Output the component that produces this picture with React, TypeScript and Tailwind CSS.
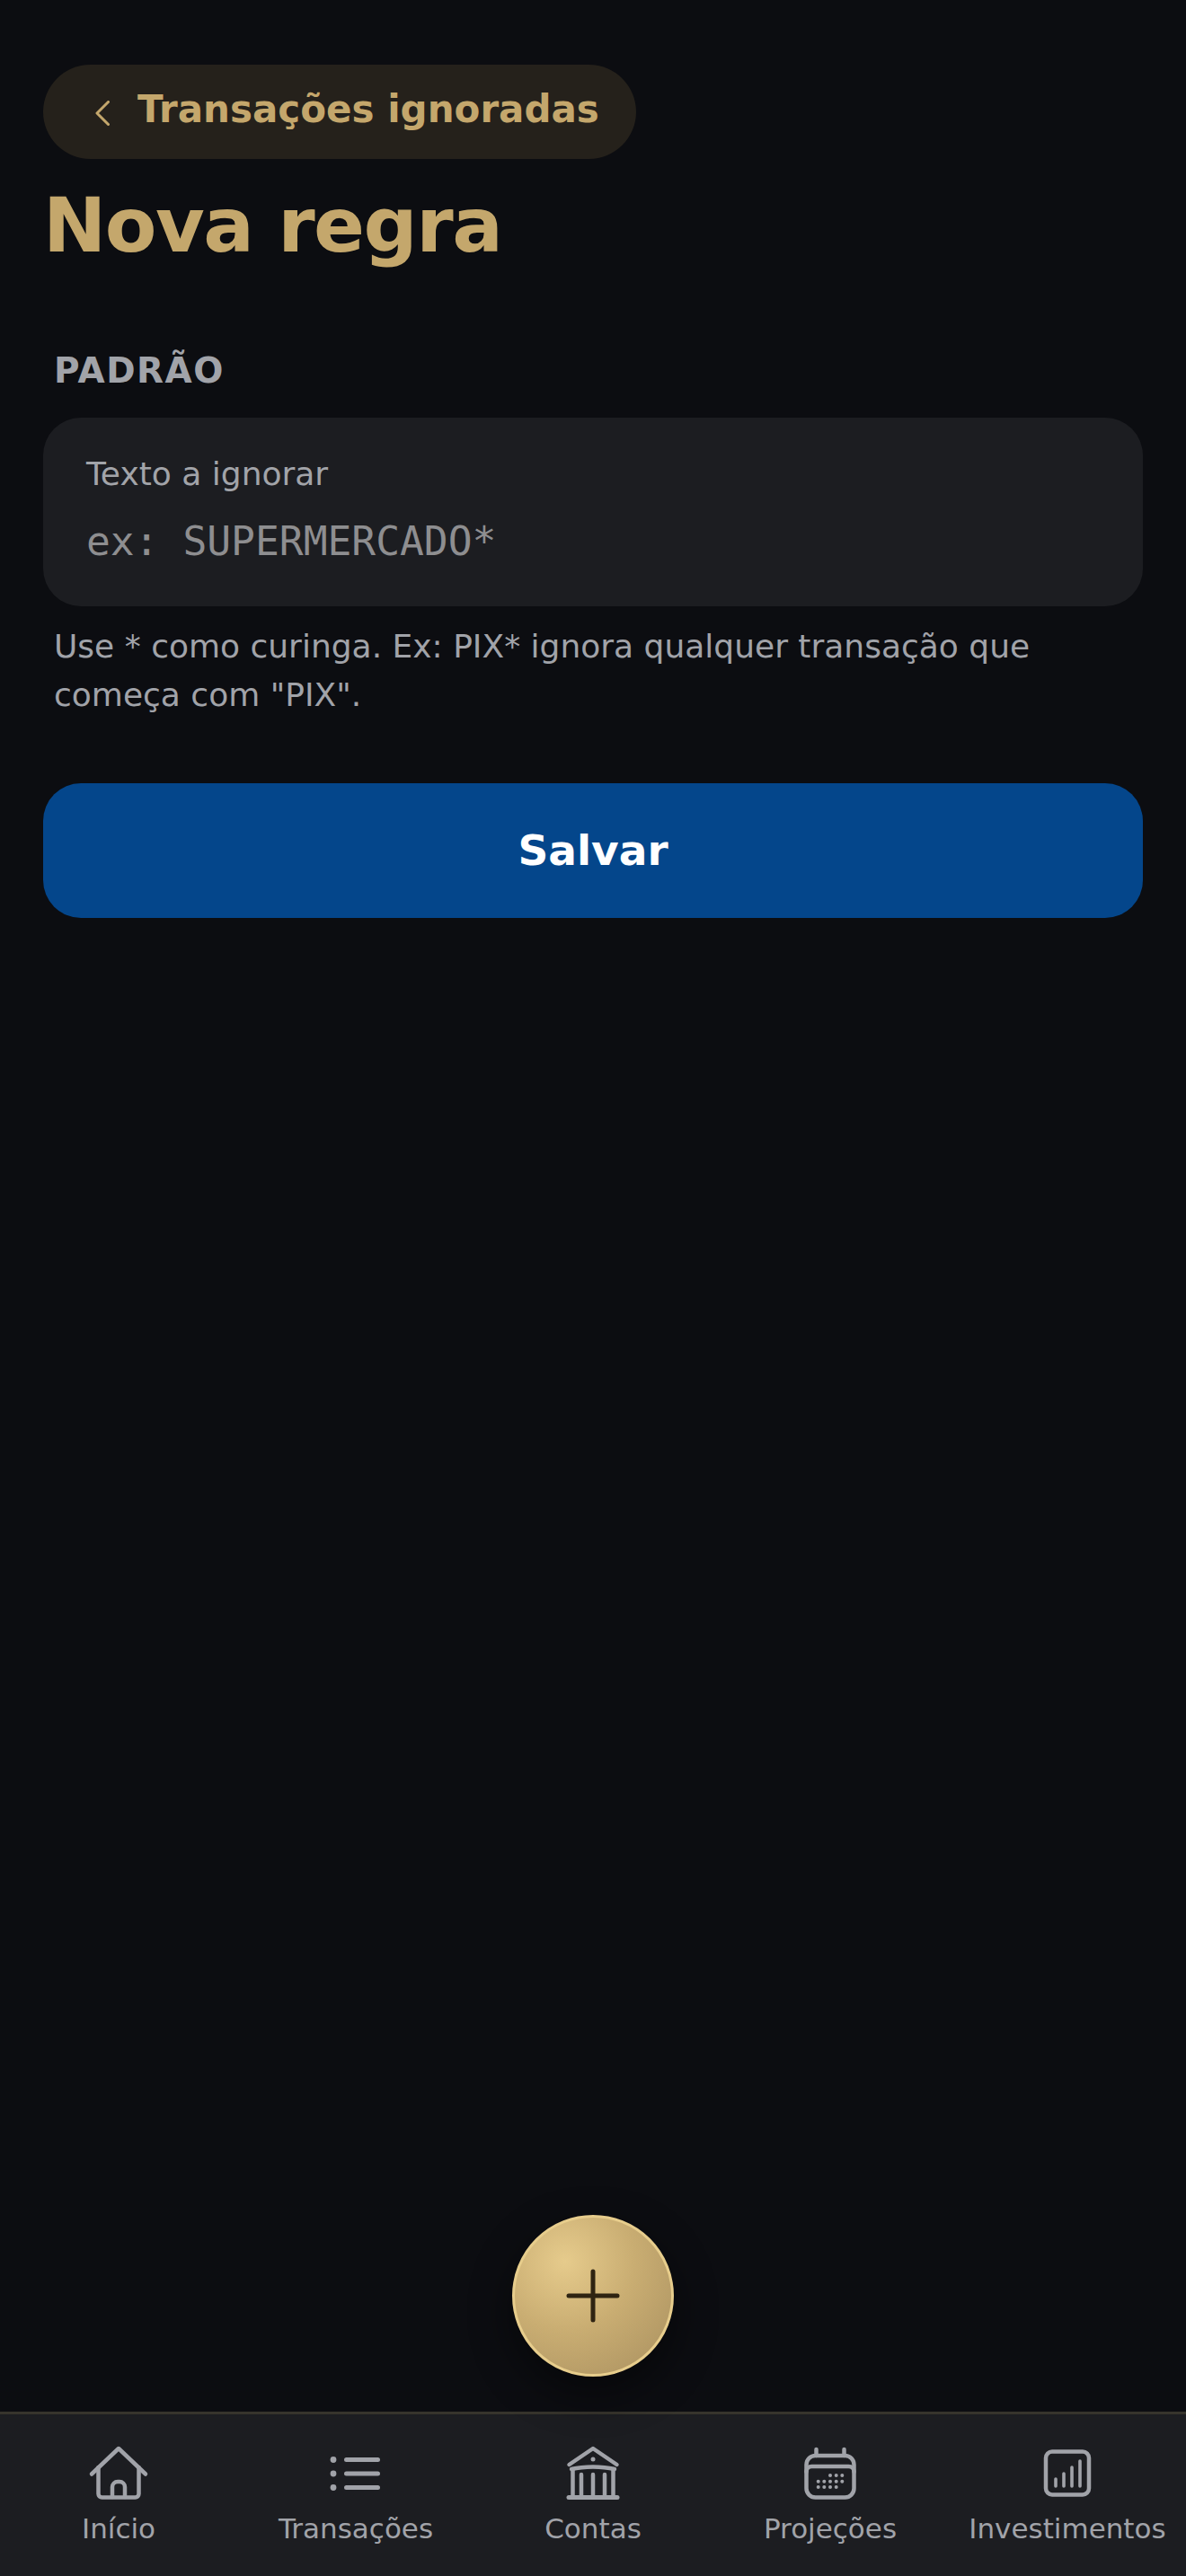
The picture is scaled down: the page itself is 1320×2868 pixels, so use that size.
const sans = "font-['DejaVu_Sans',sans-serif]";

function BackChevron() {
  return (
    <svg width="16" height="28" viewBox="0 0 16 28" fill="none" stroke="currentColor" strokeWidth="3" strokeLinecap="round" strokeLinejoin="round" className="mr-[31px] mt-[10px] shrink-0">
      <path d="M14.500 1.500 2 14l12.500 12.500" />
    </svg>
  );
}

function HomeIcon() {
  return (
    <svg width="72" height="72" viewBox="0 0 72 72" fill="none" stroke="currentColor" strokeWidth="4.5" strokeLinecap="round" strokeLinejoin="round">
      <path d="M6 36.500 36 8l30 28.500" />
      <path d="M13.500 29v29.500a4 4 0 0 0 4 4h37a4 4 0 0 0 4-4V29" />
      <path d="M29 62V51a6 6 0 0 1 6-6h2a6 6 0 0 1 6 6v11" />
    </svg>
  );
}

function ListIcon() {
  return (
    <svg width="72" height="72" viewBox="0 0 72 72" fill="none" stroke="currentColor" strokeWidth="5" strokeLinecap="round">
      <path d="M25.500 20.500h35M25.500 36h35M25.500 51.500h35" />
      <g fill="currentColor" stroke="none">
        <circle cx="11" cy="20.500" r="3.400" />
        <circle cx="11" cy="36" r="3.400" />
        <circle cx="11" cy="51.500" r="3.400" />
      </g>
    </svg>
  );
}

function BankIcon() {
  return (
    <svg width="72" height="72" viewBox="0 0 72 72" fill="none" stroke="currentColor" strokeWidth="4.5" strokeLinecap="round" strokeLinejoin="round">
      <path d="M9.500 26 36 8l26.500 18" />
      <path d="M12 31c14-3.500 34-3.500 48 0" />
      <path d="M13.500 31v29M23 37v23M36 37v23M49 37v23M58.500 31v29" />
      <path d="M9 62.500h54" strokeWidth="5" />
      <circle cx="36" cy="20" r="2.500" fill="currentColor" stroke="none" />
    </svg>
  );
}

function CalendarIcon() {
  const dots = [
    [36, 38], [42.700, 38], [49.300, 38],
    [22.700, 44.700], [29.300, 44.700], [36, 44.700], [42.700, 44.700], [49.300, 44.700],
    [22.700, 51], [29.300, 51], [36, 51], [42.700, 51],
  ];
  return (
    <svg width="72" height="72" viewBox="0 0 72 72" fill="none" stroke="currentColor" strokeWidth="4.5" strokeLinecap="round" strokeLinejoin="round">
      <rect x="9.500" y="16" width="53" height="46.500" rx="10" />
      <path d="M9.500 34a6 6 0 0 1 6-6h41a6 6 0 0 1 6 6" />
      <path d="M20.500 9v7M51.500 9v7" />
      {dots.map(([cx, cy], i) => (
        <circle key={i} cx={cx} cy={cy} r="2" fill="currentColor" stroke="none" />
      ))}
    </svg>
  );
}

function ChartIcon() {
  return (
    <svg width="72" height="72" viewBox="0 0 72 72" fill="none" stroke="currentColor" strokeWidth="4.5" strokeLinecap="round" strokeLinejoin="round">
      <rect x="12" y="11.500" width="48" height="48" rx="7" />
      <path d="M23 50v-8M32 50V36M41 50V29M50 50V22" strokeWidth="3.600" />
    </svg>
  );
}

const tabs = [
  { label: "Início", icon: <HomeIcon /> },
  { label: "Transações", icon: <ListIcon /> },
  { label: "Contas", icon: <BankIcon /> },
  { label: "Projeções", icon: <CalendarIcon /> },
  { label: "Investimentos", icon: <ChartIcon /> },
];

export default function App() {
  return (
    <div className={`${sans} relative flex h-[2868px] w-[1320px] flex-col overflow-hidden bg-[#0c0d11]`}>
      <main className="flex-1 px-[48px] pt-[72px]">
        <button className="flex h-[105px] w-[660px] items-center rounded-full bg-[#25211b] pb-[7px] pl-[58px] text-[42px] font-bold text-[#c4a76c]">
          <BackChevron />
          Transações ignoradas
        </button>
        <h1 className="mt-[23px] text-[84px] leading-[102px] font-bold tracking-[-1.500px] text-[#c4a76c]">Nova regra</h1>

        <h2 className="mt-[87px] px-[12px] text-[39px] leading-[48px] font-bold tracking-[1.500px] text-[#a1a3a9]">PADRÃO</h2>
        <div className="mt-[28px] flex h-[210px] flex-col rounded-[42px] bg-[#1c1d21] px-[48px] pt-[41px]">
          <label className="text-[36px] leading-[44px] text-[#a2a4a9]">Texto a ignorar</label>
          <input
            placeholder="ex: SUPERMERCADO*"
            className="mt-[25px] bg-transparent font-['DejaVu_Sans_Mono',monospace] text-[44.600px] leading-[56px] text-white outline-none placeholder:text-[#8e8e90]"
          />
        </div>
        <p className="mt-[18px] px-[12px] text-[36px] leading-[54px] text-[#a1a3a9]">
          Use * como curinga. Ex: PIX* ignora qualquer transação que começa com "PIX".
        </p>

        <button className="mt-[71px] flex h-[150px] w-full items-center justify-center rounded-[42px] bg-[#04468b] text-[47px] font-bold text-white">
          Salvar
        </button>
      </main>

      <button className="absolute left-[570px] top-[2466px] flex h-[180px] w-[180px] items-center justify-center rounded-full border-[3px] border-[#e7cd8c] bg-[radial-gradient(circle_at_32%_28%,#e6cb8c_0%,#c9ad72_45%,#a88f5f_100%)] shadow-[0_18px_48px_rgba(0,0,0,0.45)]">
        <svg width="60" height="60" viewBox="0 0 60 60" fill="none" stroke="#2f2412" strokeWidth="5" strokeLinecap="round">
          <path d="M30 3v54M3 30h54" />
        </svg>
      </button>

      <nav className="grid h-[183px] grid-cols-5 border-t-[3px] border-[#36342c] bg-[#1c1d21] pt-[30px]">
        {tabs.map((tab) => (
          <div key={tab.label} className="flex flex-col items-center text-[#a1a3a9]">
            {tab.icon}
            <span className="mt-[5px] text-[31px] leading-[40px] whitespace-nowrap">{tab.label}</span>
          </div>
        ))}
      </nav>
    </div>
  );
}
